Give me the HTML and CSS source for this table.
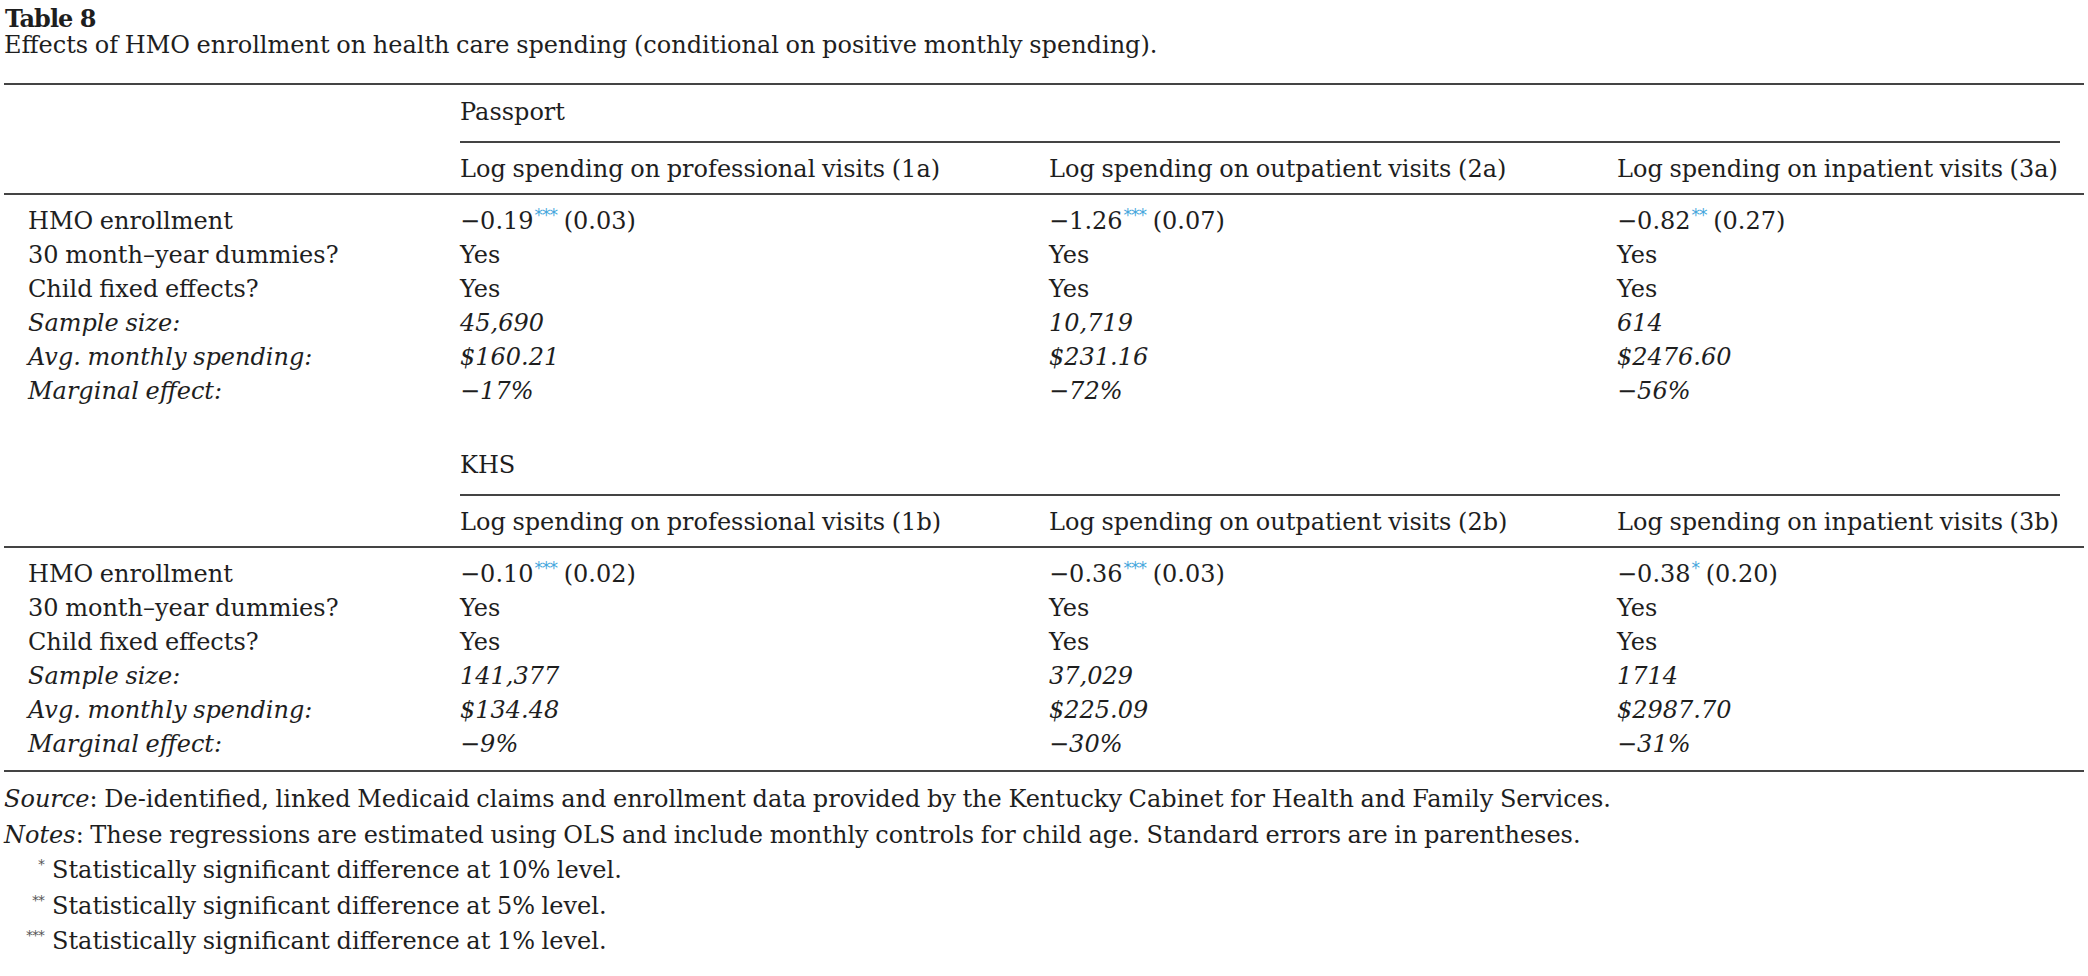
FILE: index.html
```html
<!DOCTYPE html>
<html lang="en">
<head>
<meta charset="utf-8">
<title>Table 8</title>
<link rel="stylesheet" href="styles.css">
</head>
<body>
<div class="page">
  <div class="caption">
    <div class="caption-label">Table 8</div>
    <div class="caption-title">Effects of HMO enrollment on health care spending (conditional on positive monthly spending).</div>
  </div>

  <div class="table">
    <div class="group">
      <div class="group-head"><div class="group-name">Passport</div></div>
      <div class="col-heads">
        <div></div>
        <div>Log spending on professional visits (1a)</div>
        <div>Log spending on outpatient visits (2a)</div>
        <div>Log spending on inpatient visits (3a)</div>
      </div>
      <div class="rows">
        <div class="lab">HMO enrollment</div>
        <div>−0.19<sup class="sig">***</sup> (0.03)</div>
        <div>−1.26<sup class="sig">***</sup> (0.07)</div>
        <div>−0.82<sup class="sig">**</sup> (0.27)</div>

        <div class="lab">30 month–year dummies?</div>
        <div>Yes</div><div>Yes</div><div>Yes</div>

        <div class="lab">Child fixed effects?</div>
        <div>Yes</div><div>Yes</div><div>Yes</div>

        <div class="lab it">Sample size:</div>
        <div class="it">45,690</div><div class="it">10,719</div><div class="it">614</div>

        <div class="lab it">Avg. monthly spending:</div>
        <div class="it">$160.21</div><div class="it">$231.16</div><div class="it">$2476.60</div>

        <div class="lab it">Marginal effect:</div>
        <div class="it">−17%</div><div class="it">−72%</div><div class="it">−56%</div>
      </div>
    </div>

    <div class="group group-second">
      <div class="group-head"><div class="group-name">KHS</div></div>
      <div class="col-heads">
        <div></div>
        <div>Log spending on professional visits (1b)</div>
        <div>Log spending on outpatient visits (2b)</div>
        <div>Log spending on inpatient visits (3b)</div>
      </div>
      <div class="rows">
        <div class="lab">HMO enrollment</div>
        <div>−0.10<sup class="sig">***</sup> (0.02)</div>
        <div>−0.36<sup class="sig">***</sup> (0.03)</div>
        <div>−0.38<sup class="sig">*</sup> (0.20)</div>

        <div class="lab">30 month–year dummies?</div>
        <div>Yes</div><div>Yes</div><div>Yes</div>

        <div class="lab">Child fixed effects?</div>
        <div>Yes</div><div>Yes</div><div>Yes</div>

        <div class="lab it">Sample size:</div>
        <div class="it">141,377</div><div class="it">37,029</div><div class="it">1714</div>

        <div class="lab it">Avg. monthly spending:</div>
        <div class="it">$134.48</div><div class="it">$225.09</div><div class="it">$2987.70</div>

        <div class="lab it">Marginal effect:</div>
        <div class="it">−9%</div><div class="it">−30%</div><div class="it">−31%</div>
      </div>
    </div>
  </div>

  <div class="notes">
    <p class="note"><em>Source</em>: De-identified, linked Medicaid claims and enrollment data provided by the Kentucky Cabinet for Health and Family Services.</p>
    <p class="note"><em>Notes</em>: These regressions are estimated using OLS and include monthly controls for child age. Standard errors are in parentheses.</p>
    <div class="fn"><span class="fn-mark">*</span><span>Statistically significant difference at 10% level.</span></div>
    <div class="fn"><span class="fn-mark">**</span><span>Statistically significant difference at 5% level.</span></div>
    <div class="fn"><span class="fn-mark">***</span><span>Statistically significant difference at 1% level.</span></div>
  </div>
</div>
</body>
</html>
```

FILE: styles.css
```css
html, body {
  margin: 0;
  padding: 0;
  background: #ffffff;
}

body {
  font-family: "DejaVu Serif", "Liberation Serif", serif;
  font-size: 24px;
  color: #1e1e1e;
  word-spacing: -1px;
}

.page {
  padding: 6px 4px 0 4px;
  width: 2080px;
}

.caption-label {
  font-weight: bold;
  font-size: 24px;
  line-height: 26px;
  letter-spacing: -1px;
  word-spacing: 0;
  padding-left: 1px;
}

.caption-title {
  line-height: 26px;
  margin-bottom: 25px;
}

.table {
  border-top: 2px solid #444;
  border-bottom: 2px solid #444;
}

.group-head,
.col-heads,
.rows {
  display: grid;
  grid-template-columns: 456px 589px 568px 1fr;
}

.group-head {
  padding-top: 10px;
}

.group-name {
  grid-column: 2 / -1;
  margin-right: 24px;
  line-height: 34px;
  padding-bottom: 12px;
  border-bottom: 2px solid #444;
}

.col-heads {
  line-height: 34px;
  padding-top: 9px;
  padding-bottom: 7px;
  border-bottom: 2px solid #444;
  white-space: nowrap;
}

.rows {
  line-height: 34px;
  padding-top: 9px;
  padding-bottom: 30px;
  white-space: nowrap;
}

.group-second .rows {
  padding-bottom: 9px;
}

.lab {
  padding-left: 24px;
}

.it {
  font-style: italic;
}

.sig {
  font-family: "DejaVu Sans", sans-serif;
  font-size: 17px;
  line-height: 0;
  vertical-align: 8px;
  color: #45a6dc;
  letter-spacing: -1px;
  padding-left: 1px;
}

.notes {
  margin-top: 10px;
}

.note {
  margin: 0;
  line-height: 35.5px;
}

.note em {
  font-style: italic;
}

.fn {
  display: grid;
  grid-template-columns: 40px 1fr;
  column-gap: 8px;
  line-height: 35.5px;
}

.fn-mark {
  text-align: right;
  font-family: "DejaVu Sans", sans-serif;
  font-size: 14px;
  line-height: 22px;
  letter-spacing: -1px;
  color: #555;
}
```
